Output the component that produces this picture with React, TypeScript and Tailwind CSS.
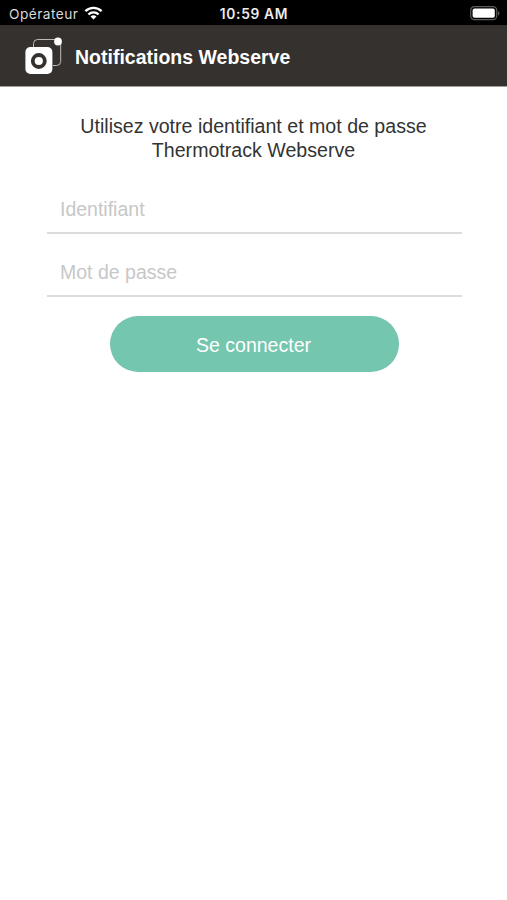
import { useState } from 'react';

const StatusBar = () => (
    <div className="h-[25px] bg-black text-white grid grid-cols-3 items-center pl-[9px] pr-[7px] pt-[2px] leading-none">
        <div className="flex items-center gap-[6px]">
            <span className="font-['Inter',sans-serif] text-[13.7px] tracking-[0.47px] text-[#d8d8d8] whitespace-nowrap pt-[2px]">Opérateur</span>
            <svg width="19" height="14" viewBox="0 0 18 14" fill="none" stroke="#fff" strokeWidth="2.4" className="shrink-0">
                <path d="M0.9 5.2a11.5 11.5 0 0 1 16.2 0" />
                <path d="M3.9 8.5a7.2 7.2 0 0 1 10.2 0" />
                <path d="M9 13.6L6 10.6a4.3 4.3 0 0 1 6 0z" fill="#fff" stroke="none" />
            </svg>
        </div>
        <span className="font-['Inter',sans-serif] text-[13.8px] font-semibold tracking-[0.65px] text-center text-[#ececec] whitespace-nowrap -ml-px pt-[2px]">10:59 AM</span>
        <svg width="30" height="15" viewBox="0 0 30 15" className="justify-self-end">
            <rect x="0.7" y="0.7" width="26" height="13" rx="3.6" fill="none" stroke="#5c5c5c" strokeWidth="1.2" />
            <rect x="2.6" y="2.6" width="22.2" height="9.2" rx="1.8" fill="#fff" />
            <path d="M28 5v4.6a2.5 2.5 0 0 0 0-4.6z" fill="#5c5c5c" />
        </svg>
    </div>
);

const Logo = () => (
    <svg width="38" height="38" viewBox="0 0 38 38" fill="none">
        <path d="M8.5 10V6.5a4 4 0 0 1 4-4H32M35.7 6v18.5a4 4 0 0 1-4 4H28" stroke="#bdbbb8" strokeWidth="1" />
        <circle cx="33" cy="4.5" r="3.9" fill="#fff" />
        <rect x="0.4" y="10" width="27" height="27" rx="5" fill="#fff" />
        <circle cx="13.8" cy="24" r="6" stroke="#35312e" strokeWidth="3.8" />
    </svg>
);

interface FieldProps {
    type: string;
    placeholder: string;
    value: string;
    onChange: (value: string) => void;
}

const Field = ({ type, placeholder, value, onChange }: FieldProps) => (
    <input
        type={type}
        placeholder={placeholder}
        value={value}
        onChange={(e) => onChange(e.target.value)}
        className="block w-full h-[50px] pt-[3px] px-[13px] text-[19.5px] text-[#333] placeholder:text-[#c7c7c7] border-b-2 border-[#dcdcdc] outline-none"
    />
);

const App = () => {
    const [login, setLogin] = useState('');
    const [password, setPassword] = useState('');

    return (
        <div className="min-h-screen bg-white font-['Liberation_Sans',Arial,sans-serif]">
            <StatusBar />
            <header className="h-[62px] bg-[#35312e] border-b border-[#a19e9b] flex items-center pt-[1px] pl-[25px] gap-3">
                <Logo />
                <h1 className="text-[19.5px] font-bold text-white pt-[4px]">Notifications Webserve</h1>
            </header>

            <form onSubmit={(e) => e.preventDefault()} className="flex flex-col pl-[47px] pr-[45px] pt-[27px]">
                <p className="text-center text-[19.6px] leading-6 text-[#333] -ml-[2px]">
                    Utilisez votre identifiant et mot de passe
                    <br />
                    Thermotrack Webserve
                </p>
                <div className="mt-[22px] flex flex-col gap-[13px]">
                    <Field type="text" placeholder="Identifiant" value={login} onChange={setLogin} />
                    <Field type="password" placeholder="Mot de passe" value={password} onChange={setPassword} />
                </div>
                <button type="submit" className="self-center -ml-px mt-[19px] pt-[3px] pr-px w-[289px] h-14 rounded-full bg-[#75c6ae] text-white text-[19.55px]">
                    Se connecter
                </button>
            </form>
        </div>
    );
};

export default App;
